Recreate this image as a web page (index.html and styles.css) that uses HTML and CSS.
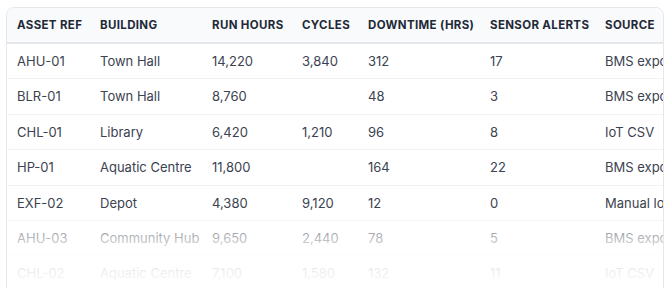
FILE: index.html
```html
<!DOCTYPE html>
<html lang="en">
<head>
<meta charset="utf-8">
<title>Asset runtime</title>
<link rel="stylesheet" href="styles.css">
</head>
<body>
<div class="card">
  <table class="grid">
    <colgroup>
      <col class="c-ref"><col class="c-bld"><col class="c-run"><col class="c-cyc"><col class="c-down"><col class="c-alert"><col class="c-src">
    </colgroup>
    <thead>
      <tr><th>Asset Ref</th><th>Building</th><th>Run Hours</th><th>Cycles</th><th>Downtime (hrs)</th><th>Sensor Alerts</th><th>Source</th></tr>
    </thead>
    <tbody>
      <tr><td>AHU-01</td><td>Town Hall</td><td>14,220</td><td>3,840</td><td>312</td><td>17</td><td>BMS export</td></tr>
      <tr><td>BLR-01</td><td>Town Hall</td><td>8,760</td><td></td><td>48</td><td>3</td><td>BMS export</td></tr>
      <tr><td>CHL-01</td><td>Library</td><td>6,420</td><td>1,210</td><td>96</td><td>8</td><td>IoT CSV</td></tr>
      <tr><td>HP-01</td><td>Aquatic Centre</td><td>11,800</td><td></td><td>164</td><td>22</td><td>BMS export</td></tr>
      <tr><td>EXF-02</td><td>Depot</td><td>4,380</td><td>9,120</td><td>12</td><td>0</td><td>Manual logs</td></tr>
      <tr><td>AHU-03</td><td>Community Hub</td><td>9,650</td><td>2,440</td><td>78</td><td>5</td><td>BMS export</td></tr>
      <tr><td>CHL-02</td><td>Aquatic Centre</td><td>7,100</td><td>1,580</td><td>132</td><td>11</td><td>IoT CSV</td></tr>
    </tbody>
  </table>
  <div class="fade"></div>
</div>
</body>
</html>
```
FILE: styles.css
```css
html, body {
  margin: 0;
  background: #ffffff;
}
body {
  padding: 7px 6px 0 6px;
  font-family: Inter, "Noto Sans", "Liberation Sans", sans-serif;
  color: #374151;
  overflow: hidden;
  height: 288px;
  box-sizing: border-box;
}
.card {
  position: relative;
  border: 1px solid #e5e7eb;
  border-radius: 8px;
  overflow: hidden;
  background: #ffffff;
  height: 320px;
}
.grid {
  border-collapse: collapse;
  table-layout: fixed;
  width: 700px;
}
.c-ref { width: 83px; }
.c-bld { width: 112px; }
.c-run { width: 90px; }
.c-cyc { width: 66px; }
.c-down { width: 122px; }
.c-alert { width: 115px; }
.c-src { width: 112px; }
.grid th {
  background: #f9fafb;
  text-align: left;
  text-transform: uppercase;
  font-size: 11.5px;
  font-weight: 700;
  letter-spacing: 0.03em;
  color: #1f2937;
  padding: 9px 10px 8px 10px;
  line-height: 17px;
  border-bottom: 2px solid #e5e7eb;
  white-space: nowrap;
  overflow: hidden;
}
.grid td {
  font-size: 13px;
  color: #3b4350;
  padding: 9px 10px;
  line-height: 16.4px;
  border-bottom: 1px solid #f1f2f4;
  white-space: nowrap;
  overflow: hidden;
}
.fade {
  position: absolute;
  left: 0;
  right: 0;
  top: 200px;
  height: 90px;
  background: linear-gradient(to bottom, rgba(255,255,255,0) 0%, rgba(255,255,255,0.75) 40%, rgba(255,255,255,0.95) 80%, #ffffff 100%);
  pointer-events: none;
}
```
